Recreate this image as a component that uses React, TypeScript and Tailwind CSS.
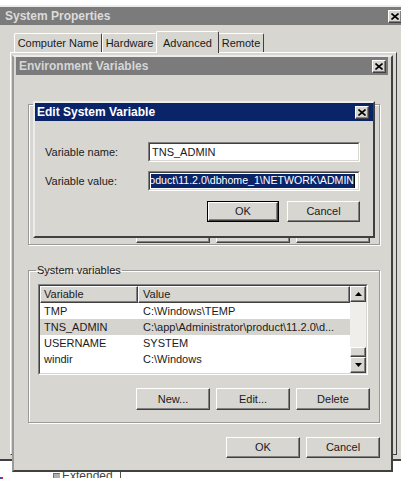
import React from "react";

const raised =
  "border border-t-white border-l-white border-r-[#404040] border-b-[#404040] shadow-[inset_-1px_-1px_0_#808080] bg-[#d8d6d1]";
const etched =
  "border border-[#9a9a9a] shadow-[1px_1px_0_#ffffff,inset_1px_1px_0_#ffffff]";

function CloseBtn() {
  return (
    <div className={`${raised} w-[14px] h-[13px] flex items-center justify-center shrink-0`}>
      <svg width="8" height="7" viewBox="0 0 8 7">
        <path d="M0.5 0.5 L7.5 6.5 M7.5 0.5 L0.5 6.5" stroke="#000" strokeWidth="1.6" />
      </svg>
    </div>
  );
}

function Btn({ label, w, def }: { label: string; w: string; def?: boolean }) {
  const inner = (
    <div className={`${raised} h-full w-full flex items-center justify-center text-[11px] text-[#1a1a1a]`}>
      {label}
    </div>
  );
  if (def) {
    return <div className={`${w} h-full border border-black`}>{inner}</div>;
  }
  return <div className={`${w} h-full`}>{inner}</div>;
}

function Sunken({ children, className }: { children?: React.ReactNode; className?: string }) {
  return (
    <div
      className={`border border-t-[#808080] border-l-[#808080] border-r-white border-b-white ${className ?? ""}`}
    >
      <div className="h-full w-full border border-t-[#404040] border-l-[#404040] border-r-[#d8d6d1] border-b-[#d8d6d1] bg-white overflow-hidden">
        {children}
      </div>
    </div>
  );
}

function Tab({ label, w, sel }: { label: string; w: string; sel?: boolean }) {
  if (sel) {
    return (
      <div
        className={`${w} h-[22px] mb-[-1px] mx-[-1px] relative z-10 bg-[#d8d6d1] border-t border-l border-r border-t-white border-l-white border-r-[#404040] rounded-t-[2px] flex items-start justify-center pt-[3px] text-[11px] text-[#1a1a1a]`}
      >
        {label}
      </div>
    );
  }
  return (
    <div
      className={`${w} h-[19px] border-t border-l border-r border-t-white border-l-white border-r-[#404040] rounded-t-[2px] flex items-center justify-center text-[11px] text-[#1a1a1a]`}
    >
      {label}
    </div>
  );
}

const rows = [
  { v: "TMP", val: "C:\\Windows\\TEMP" },
  { v: "TNS_ADMIN", val: "C:\\app\\Administrator\\product\\11.2.0\\d...", sel: true },
  { v: "USERNAME", val: "SYSTEM" },
  { v: "windir", val: "C:\\Windows" },
];

export default function App() {
  return (
    <div className="relative w-[401px] h-[484px] overflow-hidden bg-white font-['Liberation_Sans',Arial,sans-serif] text-[#1a1a1a]">
      {/* System Properties window */}
      <div className="absolute left-[-2px] top-[5px] w-[412px] h-[456px] bg-[#d8d6d1] border-2 border-t-[#ececec] border-l-[#ececec] border-r-[#404040] border-b-[#404040] flex flex-col">
        <div className="h-[18px] bg-[#7b7b7b] flex items-center justify-between pl-[5px] pr-[6px]">
          <span className="text-[12px] font-bold text-[#dcdcdc] leading-none">System Properties</span>
          <CloseBtn />
        </div>
        <div className="mt-[8px] pl-[14px] flex items-end h-[19px]">
          <Tab label="Computer Name" w="w-[88px]" />
          <Tab label="Hardware" w="w-[55px]" />
          <Tab label="Advanced" w="w-[63px]" sel />
          <Tab label="Remote" w="w-[46px]" />
        </div>
        <div className="flex-1 ml-[10px] mr-[11px] mb-[4px] border border-t-white border-l-white border-r-[#404040] border-b-[#404040]" />
      </div>

      {/* Environment Variables window */}
      <div className="absolute left-[12px] top-[55px] w-[381px] h-[417px] bg-[#d8d6d1] border-2 border-t-[#ececec] border-l-[#9a9a9a] border-r-[#404040] border-b-[#404040] flex flex-col">
        <div className="h-[18px] ml-[2px] mr-[3px] bg-[#7b7b7b] flex items-center justify-between pl-[3px] pr-[2px]">
          <span className="text-[12px] font-bold text-[#d6d6d6] leading-none">Environment Variables</span>
          <CloseBtn />
        </div>
        <div className="flex flex-col pl-[14px] pr-[11px]">
          {/* User variables (mostly hidden) */}
          <div className={`${etched} mt-[29px] h-[141px] flex flex-col justify-end pb-[1px]`}>
            <div className="h-[22px] flex justify-end gap-[6px] pr-[9px]">
              <Btn label="New..." w="w-[74px]" />
              <Btn label="Edit..." w="w-[74px]" />
              <Btn label="Delete" w="w-[74px]" />
            </div>
          </div>

          {/* System variables */}
          <fieldset className={`${etched} mt-[19px] h-[159px] flex flex-col m-0 p-0 min-w-0`}>
            <legend className="ml-[7px] px-[1px] text-[11px] leading-[13px]">System variables</legend>
            <Sunken className="mt-[7px] ml-[9px] mr-[11px] h-[91px]">
              <div className="flex h-full">
                <div className="flex-1 flex flex-col min-w-0">
                  <div className="h-[17px] flex shrink-0">
                    <div className={`${raised} w-[98px] h-full flex items-center pl-[3px] text-[11px]`}>Variable</div>
                    <div className={`${raised} flex-1 h-full flex items-center pl-[4px] text-[11px]`}>Value</div>
                  </div>
                  {rows.map((r) => (
                    <div
                      key={r.v}
                      className={`h-[16px] flex items-center text-[11px] whitespace-nowrap ${r.sel ? "bg-[#d6d4cf]" : ""}`}
                    >
                      <div className="w-[98px] pl-[4px]">{r.v}</div>
                      <div className="flex-1 pl-[5px] overflow-hidden">{r.val}</div>
                    </div>
                  ))}
                </div>
                <div className="w-[16px] flex flex-col">
                  <div className={`${raised} h-[16px] flex items-center justify-center`}>
                    <svg width="7" height="4" viewBox="0 0 7 4">
                      <path d="M3.5 0 L7 4 L0 4 Z" fill="#000" />
                    </svg>
                  </div>
                  <div className="flex-1 bg-[#efeeea] flex flex-col justify-end">
                    <div className={`${raised} h-[10px]`} />
                  </div>
                  <div className={`${raised} h-[16px] flex items-center justify-center`}>
                    <svg width="7" height="4" viewBox="0 0 7 4">
                      <path d="M0 0 L7 0 L3.5 4 Z" fill="#000" />
                    </svg>
                  </div>
                </div>
              </div>
            </Sunken>
            <div className="mt-[13px] h-[22px] flex justify-end gap-[6px] pr-[9px]">
              <Btn label="New..." w="w-[74px]" />
              <Btn label="Edit..." w="w-[74px]" />
              <Btn label="Delete" w="w-[74px]" />
            </div>
          </fieldset>

          <div className="mt-[14px] h-[21px] flex justify-end gap-[6px]">
            <Btn label="OK" w="w-[74px]" />
            <Btn label="Cancel" w="w-[74px]" />
          </div>
        </div>
      </div>

      {/* Edit System Variable dialog */}
      <div className="absolute left-[33px] top-[101px] w-[342px] h-[137px] bg-[#d8d6d1] border-2 border-t-[#ececec] border-l-[#ececec] border-r-[#404040] border-b-[#404040] flex flex-col">
        <div className="h-[18px] bg-[#0a246a] flex items-center justify-between pl-[2px] pr-[4px]">
          <span className="text-[12px] font-bold text-white leading-none">Edit System Variable</span>
          <CloseBtn />
        </div>
        <div className="flex flex-col pl-[10px] pr-[13px]">
          <div className="mt-[21px] h-[20px] flex items-center">
            <div className="w-[103px] text-[11px]">Variable name:</div>
            <Sunken className="w-[212px] h-[20px]">
              <div className="h-full flex items-center pl-[2px] text-[11px]">TNS_ADMIN</div>
            </Sunken>
          </div>
          <div className="mt-[9px] h-[20px] flex items-center">
            <div className="w-[103px] text-[11px]">Variable value:</div>
            <Sunken className="w-[212px] h-[20px]">
              <div className="h-full flex items-center pl-[1px] pr-[3px]">
                <div className="flex-1 h-[14px] bg-[#0a246a] overflow-hidden flex justify-end items-center">
                  <span className="whitespace-nowrap text-[10.6px] text-white">
                    roduct\11.2.0\dbhome_1\NETWORK\ADMIN
                  </span>
                </div>
                <div className="w-[1px] h-[14px] bg-black" />
              </div>
            </Sunken>
          </div>
          <div className="mt-[10px] h-[21px] flex justify-end gap-[8px]">
            <Btn label="OK" w="w-[72px]" def />
            <Btn label="Cancel" w="w-[73px]" />
          </div>
        </div>
      </div>

      {/* bits of a window below, clipped */}
      <div className="absolute left-[53px] top-[471px] h-[7px] overflow-hidden flex items-start gap-[2px]">
        <div className="mt-[2px] w-[7px] h-[9px] bg-[#b0b0b0] border-t border-l border-[#707070]" />
        <div className="text-[12px] text-[#444] leading-[14px] mt-[-2px]">Extended</div>
        <div className="ml-[5px] mt-[1px] w-[1px] h-[6px] bg-[#555]" />
      </div>
      <div className="absolute left-0 top-[477px] w-[2px] h-[2px] bg-[#3050d0]" />
      <div className="absolute left-[2px] top-[477px] w-[1px] h-[2px] bg-[#d03030]" />
    </div>
  );
}
